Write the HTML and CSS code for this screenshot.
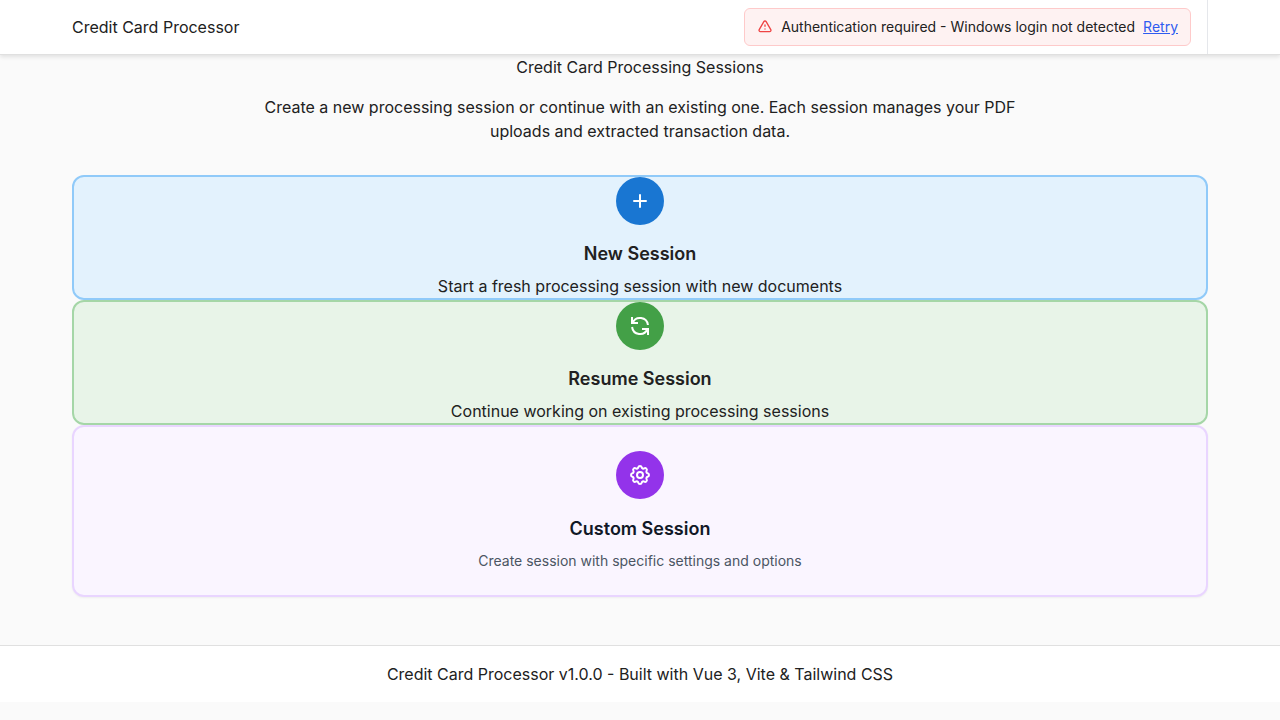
FILE: index.html
```html
<!DOCTYPE html>
<html lang="en">
<head>
<meta charset="utf-8">
<meta name="viewport" content="width=device-width, initial-scale=1">
<title>Credit Card Processor</title>
<link rel="stylesheet" href="styles.css">
</head>
<body>
<header class="header">
  <div class="container header-row">
    <span class="brand">Credit Card Processor</span>
    <div class="header-side">
      <div class="alert" role="alert">
        <svg class="alert-icon" viewBox="0 0 24 24" aria-hidden="true"><path d="M12 9v2m0 4h.01m-6.938 4h13.856c1.54 0 2.502-1.667 1.732-3L13.732 4c-.77-1.333-2.694-1.333-3.464 0L3.34 16c-.77 1.333.192 3 1.732 3z"/></svg>
        <span>Authentication required - Windows login not detected</span>
        <button class="retry" type="button">Retry</button>
      </div>
    </div>
  </div>
</header>
<main class="container main">
  <section class="intro">
    <h1 class="title">Credit Card Processing Sessions</h1>
    <p class="lead">Create a new processing session or continue with an existing one. Each session manages your PDF uploads and extracted transaction data.</p>
  </section>
  <section class="cards">
    <button class="card card-new" type="button">
      <span class="badge"><svg class="icon" viewBox="0 0 24 24" aria-hidden="true"><path d="M12 6v12m6-6H6"/></svg></span>
      <span class="card-title">New Session</span>
      <span class="card-text">Start a fresh processing session with new documents</span>
    </button>
    <button class="card card-resume" type="button">
      <span class="badge"><svg class="icon icon-sharp" viewBox="0 0 24 24" aria-hidden="true"><path d="M4 3v6h.582m15.356 2A8.001 8.001 0 004.582 9m0 0H10m10 12v-6h-.581m0 0a8.003 8.003 0 01-15.357-2m15.357 2H14"/></svg></span>
      <span class="card-title">Resume Session</span>
      <span class="card-text">Continue working on existing processing sessions</span>
    </button>
    <button class="card card-custom" type="button">
      <span class="badge"><svg class="icon" viewBox="0 0 24 24" aria-hidden="true"><path d="M10.325 4.317c.426-1.756 2.924-1.756 3.35 0a1.724 1.724 0 002.573 1.066c1.543-.94 3.31.826 2.37 2.37a1.724 1.724 0 001.065 2.572c1.756.426 1.756 2.924 0 3.35a1.724 1.724 0 00-1.066 2.573c.94 1.543-.826 3.31-2.37 2.37a1.724 1.724 0 00-2.572 1.065c-.426 1.756-2.924 1.756-3.35 0a1.724 1.724 0 00-2.573-1.066c-1.543.94-3.31-.826-2.37-2.37a1.724 1.724 0 00-1.065-2.572c-1.756-.426-1.756-2.924 0-3.35a1.724 1.724 0 001.066-2.573c-.94-1.543.826-3.31 2.37-2.37.996.608 2.296.07 2.572-1.065z"/><path d="M15 12a3 3 0 11-6 0 3 3 0 016 0z"/></svg></span>
      <span class="card-title">Custom Session</span>
      <span class="card-text">Create session with specific settings and options</span>
    </button>
  </section>
</main>
<footer class="footer">
  <p class="container footer-text">Credit Card Processor v1.0.0 - Built with Vue 3, Vite &amp; Tailwind CSS</p>
</footer>
</body>
</html>
```
FILE: styles.css
```css
*, *::before, *::after { box-sizing: border-box; }
body {
  margin: 0;
  background: #fafafa;
  color: #212121;
  font: 16px/24px Inter, "Liberation Sans", sans-serif;
}
h1, p { margin: 0; font-size: inherit; font-weight: 400; }
button { font: inherit; color: inherit; cursor: pointer; }
.container { max-width: 1200px; margin: 0 auto; padding: 0 32px; }
.header {
  position: relative;
  background: #fff;
  box-shadow: 0 2px 4px rgba(0, 0, 0, .1);
  border-bottom: 1px solid #e0e0e0;
}
.header-row { display: flex; align-items: center; justify-content: space-between; }
.header-side { padding: 8px 16px; border-right: 1px solid #e5e7eb; }
.alert {
  display: flex;
  align-items: center;
  gap: 8px;
  padding: 8px 12px;
  border: 1px solid #fecaca;
  border-radius: 6px;
  background: #fef2f2;
  font-size: 14px;
  line-height: 20px;
}
.alert-icon { width: 16px; height: 16px; fill: none; stroke: #ef4444; stroke-width: 2; stroke-linecap: round; stroke-linejoin: round; }
.retry { padding: 0; border: 0; background: none; color: #2f5cf0; text-decoration: underline; }
.main { padding-bottom: 48px; }
.intro { max-width: 768px; margin: 0 auto 32px; text-align: center; }
.title { margin-bottom: 16px; }
.card {
  display: flex;
  flex-direction: column;
  align-items: center;
  width: 100%;
  padding: 0;
  border: 2px solid;
  border-radius: 12px;
}
.card-new { background: #e3f2fd; border-color: #90caf9; }
.card-resume { background: #e8f4e8; border-color: #a5d6a7; }
.card-custom { padding: 24px; background: #faf5ff; border-color: #e9d5ff; box-shadow: 0 1px 2px rgba(0, 0, 0, .05); }
.badge { display: flex; align-items: center; justify-content: center; width: 48px; height: 48px; margin-bottom: 16px; border-radius: 50%; }
.card-new .badge { background: #1976d2; }
.card-resume .badge { background: #43a047; }
.card-custom .badge { background: #9333ea; }
.icon { width: 24px; height: 24px; fill: none; stroke: #fff; stroke-width: 2; stroke-linecap: round; stroke-linejoin: round; }
.icon-sharp { stroke-linecap: butt; stroke-linejoin: miter; }
.card-title { margin-bottom: 8px; font-size: 18px; font-weight: 600; line-height: 25px; }
.card-custom .card-title { color: #111827; line-height: 28px; }
.card-custom .card-text { color: #4b5563; font-size: 14px; line-height: 20px; }
.footer { background: #fff; border-top: 1px solid #e0e0e0; text-align: center; }
.footer-text { padding-top: 16px; padding-bottom: 16px; }
```
